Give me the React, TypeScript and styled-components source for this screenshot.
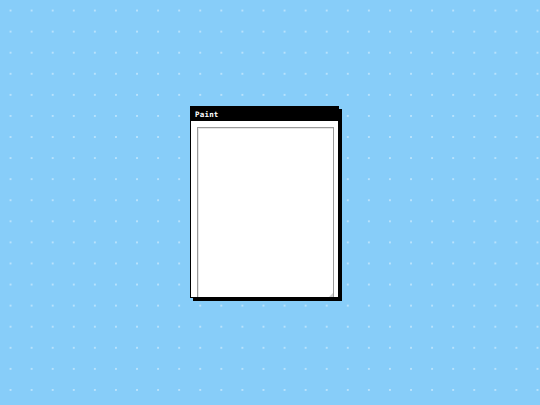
import styled, { createGlobalStyle } from 'styled-components'

const GlobalStyle = createGlobalStyle`
  html, body {
    margin: 0;
    padding: 0;
    height: 100%;
  }
  body {
    font-family: "DejaVu Sans Mono", "Liberation Mono", monospace;
  }
`

const Desktop = styled.main`
  width: 540px;
  height: 405px;
  box-sizing: border-box;
  padding: 0 11px 1px 0;
  display: flex;
  align-items: center;
  justify-content: center;
  background-color: #87cdf9;
  background-image: radial-gradient(
    circle,
    rgba(210, 238, 255, 0.85) 0.55px,
    transparent 1.1px
  );
  background-size: 21.09px 21.09px;
  background-position: 0 0;
  overflow: hidden;
`

const Window = styled.section`
  width: 149px;
  height: 192px;
  box-sizing: border-box;
  border: 1px solid #000;
  background: #fff;
  box-shadow: 3px 3px 0 #000;
  display: flex;
  flex-direction: column;
`

const TitleBar = styled.header`
  height: 14px;
  background: #000;
  color: #fff;
  display: flex;
  align-items: center;
  padding: 0 4px;
  font-size: 7.5px;
  font-weight: bold;
  letter-spacing: 0.2px;
`

const Body = styled.div`
  flex: 1;
  display: flex;
  padding: 6px 4px 0 6px;
  min-height: 0;
`

const Canvas = styled.div`
  flex: 1;
  border: 1px solid #9a9a9a;
  border-bottom: none;
  box-shadow: inset 1px 1px 0 #e6e6e6;
  background: #fff;
  position: relative;
`

const Grip = styled.span`
  position: absolute;
  right: 0;
  bottom: 0;
  width: 0;
  height: 0;
  border-left: 4px solid transparent;
  border-bottom: 4px solid #d0d0d0;
`

export default function App() {
  return (
    <>
      <GlobalStyle />
      <Desktop>
        <Window>
          <TitleBar>Paint</TitleBar>
          <Body>
            <Canvas>
              <Grip />
            </Canvas>
          </Body>
        </Window>
      </Desktop>
    </>
  )
}
